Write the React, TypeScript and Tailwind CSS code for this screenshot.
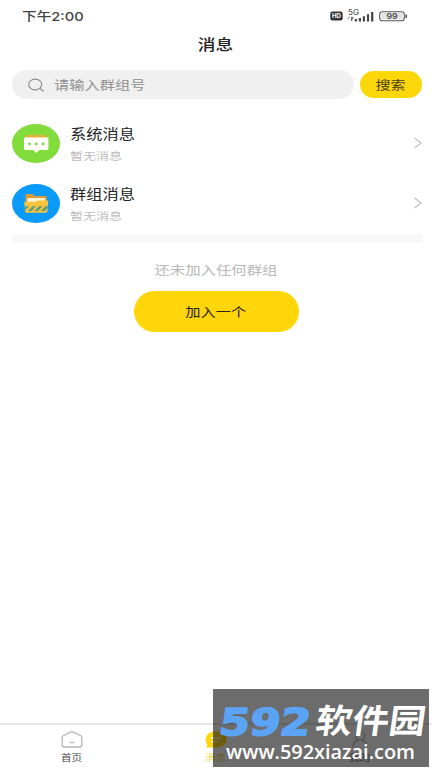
import type { ReactNode } from "react"

interface MessageRow {
  title: string
  subtitle: string
  icon: ReactNode
}

function ChatIcon() {
  return (
    <svg viewBox="0 0 48 39" className="h-[39px] w-12">
      <ellipse cx="24" cy="19.5" rx="24" ry="19.5" fill="#82dc3c" />
      <path d="M14 14V12.2Q14 11 15.5 11H33Q34.5 11 34.5 12.2V14Z" fill="#e5b43c" />
      <path d="M13 13.5H35.5Q36.4 13.5 36.4 14.3V25.2Q36.4 26 35.5 26H27.5L24.3 29L21 26H13Q12 26 12 25.2V14.3Q12 13.5 13 13.5Z" fill="#fff" />
      <circle cx="17.5" cy="20" r="1.4" fill="#82d548" />
      <circle cx="24.3" cy="20" r="1.4" fill="#82d548" />
      <circle cx="31" cy="20" r="1.4" fill="#82d548" />
    </svg>
  )
}

function FolderIcon() {
  return (
    <svg viewBox="0 0 48 39" className="h-[39px] w-12">
      <ellipse cx="24" cy="19.5" rx="24" ry="19.5" fill="#0a9bfa" />
      <path d="M13.5 20V11Q13.5 10 14.5 10H20.5L22.5 12H33.5Q34.8 12 34.8 13V20Z" fill="#d99a32" />
      <path d="M15.3 14H33.2V19H15.3Z" fill="#fff3d5" />
      <path d="M12.2 17.8H24L25.5 16.6H36.3L35.3 27.5Q35.1 28.7 33.8 28.7H14.7Q13.4 28.7 13.2 27.5Z" fill="#f5c43c" />
      <path d="M13.2 26V22.3H17L13.5 26ZM16 27L20.5 22.3H24L19.5 27ZM22.5 27L27 22.3H30.5L26 27ZM29 27L33.5 22.3H35.6V23.8L32.5 27Z" fill="#5b9c83" />
    </svg>
  )
}

const rows: MessageRow[] = [
  { title: "系统消息", subtitle: "暂无消息", icon: <ChatIcon /> },
  { title: "群组消息", subtitle: "暂无消息", icon: <FolderIcon /> },
]

function StatusBar() {
  return (
    <div className="flex h-[31px] items-center justify-between pl-[22px] pr-6 text-[#444]">
      <span className="mt-0.5 origin-left scale-x-[1.22] font-['Inter','Noto_Sans_CJK_SC',sans-serif] text-[12px] font-medium leading-none">
        下午2:00
      </span>
      <svg viewBox="0 0 78 14" className="mb-0.5 h-3.5 w-[78px]">
        <rect x="0.3" y="3.5" width="12.4" height="9" rx="2.2" fill="#333" />
        <text x="6.5" y="10.3" textAnchor="middle" textLength="9" lengthAdjust="spacingAndGlyphs" fontFamily="Inter, sans-serif" fontWeight="700" fontSize="6.3" fill="#fff">HD</text>
        <text x="18" y="7.3" textLength="11" lengthAdjust="spacingAndGlyphs" fontFamily="Inter, sans-serif" fontSize="7" fill="#333">5G</text>
        <path d="M17.7 11L19.8 9M21.5 13V9.3H23V11H21.5" fill="none" stroke="#555" strokeWidth="0.9" />
        <path d="M25.9 13.5V11M29.9 13.5V10M33.9 13.5V8.2M38 13.5V6.2M42.2 13.5V4" stroke="#444" strokeWidth="2.2" />
        <rect x="49.7" y="3.7" width="24.6" height="9" rx="2.8" fill="#fff" stroke="#555" strokeWidth="1.1" />
        <rect x="51.3" y="5.1" width="21.4" height="6.2" rx="1.4" fill="#e2e2e2" />
        <path d="M76.2 6.5V10" stroke="#444" strokeWidth="1.4" />
        <text x="62" y="10.8" textAnchor="middle" textLength="11" lengthAdjust="spacingAndGlyphs" fontFamily="Inter, sans-serif" fontWeight="500" fontSize="7.4" fill="#333">99</text>
      </svg>
    </div>
  )
}

function SearchBar() {
  return (
    <div className="mt-[11px] flex items-center gap-1.5 pl-3 pr-2.5">
      <div className="flex h-[29px] w-[342px] items-center rounded-full bg-[#f0f0f0] pl-4">
        <svg viewBox="0 0 16 14" className="h-3.5 w-4 shrink-0" fill="none" stroke="#888" strokeWidth="1.1">
          <ellipse cx="7.2" cy="6.5" rx="6.5" ry="5.4" />
          <path d="M12 10.5L15.6 13.2" />
        </svg>
        <span className="ml-2.5 mt-0.5 origin-left scale-x-[1.23] text-[12.4px] leading-none text-[#8f8f8f]">请输入群组号</span>
      </div>
      <button className="flex h-[27px] w-[62px] items-center justify-center rounded-full bg-[#fcd70a]">
        <span className="mr-0.5 mt-0.5 scale-x-[1.21] text-[12.4px] leading-none text-[#4a4012]">搜索</span>
      </button>
    </div>
  )
}

function Row({ title, subtitle, icon }: MessageRow) {
  return (
    <div className="flex h-[60px] items-center pl-3 pr-2.5">
      {icon}
      <div className="ml-[9.5px] mt-0.5 flex flex-1 flex-col items-start gap-[9.5px]">
        <span className="origin-left scale-x-[1.23] text-[13.2px] leading-[13px] text-[#222]">{title}</span>
        <span className="origin-left scale-x-[1.23] text-[10.6px] leading-[11px] text-[#bdbdbd]">{subtitle}</span>
      </div>
      <svg viewBox="0 0 9 12" className="h-3 w-[9px]" fill="none" stroke="#bcbcbc" strokeWidth="1.1">
        <path d="M1.6 1L8.2 6L1.6 11" />
      </svg>
    </div>
  )
}

function TabBar() {
  return (
    <nav className="mt-auto grid h-[45px] grid-cols-3 border-t-2 border-[#e6e6e6] text-[8.6px] leading-none">
      <div className="flex flex-col items-center pt-1.5">
        <svg viewBox="0 0 22 17" className="h-[17px] w-[22px]" fill="none" stroke="#b5b5b5" strokeWidth="1.3">
          <path d="M1.2 6.3Q1.2 5.3 2.2 4.7L9.5 1.2Q11 .6 12.5 1.2L19.8 4.7Q20.8 5.3 20.8 6.3V14Q20.8 16 18.6 16H3.4Q1.2 16 1.2 14Z" />
          <path d="M8.5 11.5H13.5" />
        </svg>
        <span className="mt-[5px] scale-x-[1.23] text-[#444]">首页</span>
      </div>
      <div className="flex flex-col items-center pt-1.5">
        <svg viewBox="0 0 22 17" className="h-[17px] w-[22px]">
          <path d="M11 .5C17 .5 21.5 4 21.5 8.5S17 16.5 11 16.5H2.5Q1 16.5 1.6 15.2L2.4 13.2C1 12 .5 10.3 .5 8.5C.5 4 5 .5 11 .5Z" fill="#fcd70a" />
          <path d="M6 7H16M6.5 10.5H12.5" stroke="#fff" strokeWidth="1.6" />
        </svg>
        <span className="mt-[5px] scale-x-[1.23] text-[#f0d83c]">消息</span>
      </div>
      <div className="flex flex-col items-center pt-1.5">
        <svg viewBox="0 0 22 17" className="h-[17px] w-[22px]" fill="none" stroke="#aaa" strokeWidth="1.2">
          <ellipse cx="11" cy="5" rx="4.6" ry="4" />
          <path d="M4 16Q4 10.5 9 9.5M13 9.5Q18 10.5 18 16" />
        </svg>
        <span className="mt-[5px] scale-x-[1.23] text-[#666]">我的</span>
      </div>
    </nav>
  )
}

function SiteBadge() {
  return (
    <div className="absolute left-[213px] top-[689px] h-[78px] w-[216px] bg-[#0a0a0a]/60">
      <svg viewBox="0 0 216 78" className="h-[78px] w-[216px]">
        <g transform="translate(4 46) skewX(-8)">
          <text x="1" y="-0.5" textLength="91" lengthAdjust="spacingAndGlyphs" fontFamily="'DejaVu Sans', sans-serif" fontWeight="700" fontSize="37" fill="#5ba3f5" stroke="#5ba3f5" strokeWidth="1.8" strokeLinejoin="miter">592</text>
          <text x="97" y="-2" textLength="110" lengthAdjust="spacingAndGlyphs" fontFamily="'Noto Sans CJK SC', sans-serif" fontWeight="700" fontSize="33.5" fill="#fff">软件园</text>
        </g>
        <text x="13" y="70" textLength="189" lengthAdjust="spacingAndGlyphs" fontFamily="'Open Sans', sans-serif" fontWeight="600" fontSize="20" fill="#fff">www.592xiazai.com</text>
      </svg>
    </div>
  )
}

export default function App() {
  return (
    <div className="relative flex h-[768px] w-[432px] flex-col overflow-hidden bg-white font-['Noto_Sans_CJK_SC',sans-serif]">
      <StatusBar />
      <header className="flex h-7 items-center justify-center">
        <h1 className="mb-0.5 mr-px scale-x-[1.23] text-[14.4px] font-medium leading-none text-[#222]">消息</h1>
      </header>
      <SearchBar />
      <div className="mt-3.5">
        {rows.map((row) => (
          <Row key={row.title} {...row} />
        ))}
      </div>
      <div className="ml-3 mr-2.5 mt-px h-[9px] bg-[#f8f8f8]" />
      <div className="flex flex-col items-center">
        <p className="ml-px mt-5 scale-x-[1.23] text-[12.5px] leading-[14px] text-[#b8b8b8]">还未加入任何群组</p>
        <button className="mt-3.5 flex h-[41px] w-[165px] items-center justify-center rounded-full bg-[#ffd60a]">
          <span className="mt-0.5 scale-x-[1.23] text-[12.4px] leading-none text-[#2b2410]">加入一个</span>
        </button>
      </div>
      <TabBar />
      <SiteBadge />
    </div>
  )
}
